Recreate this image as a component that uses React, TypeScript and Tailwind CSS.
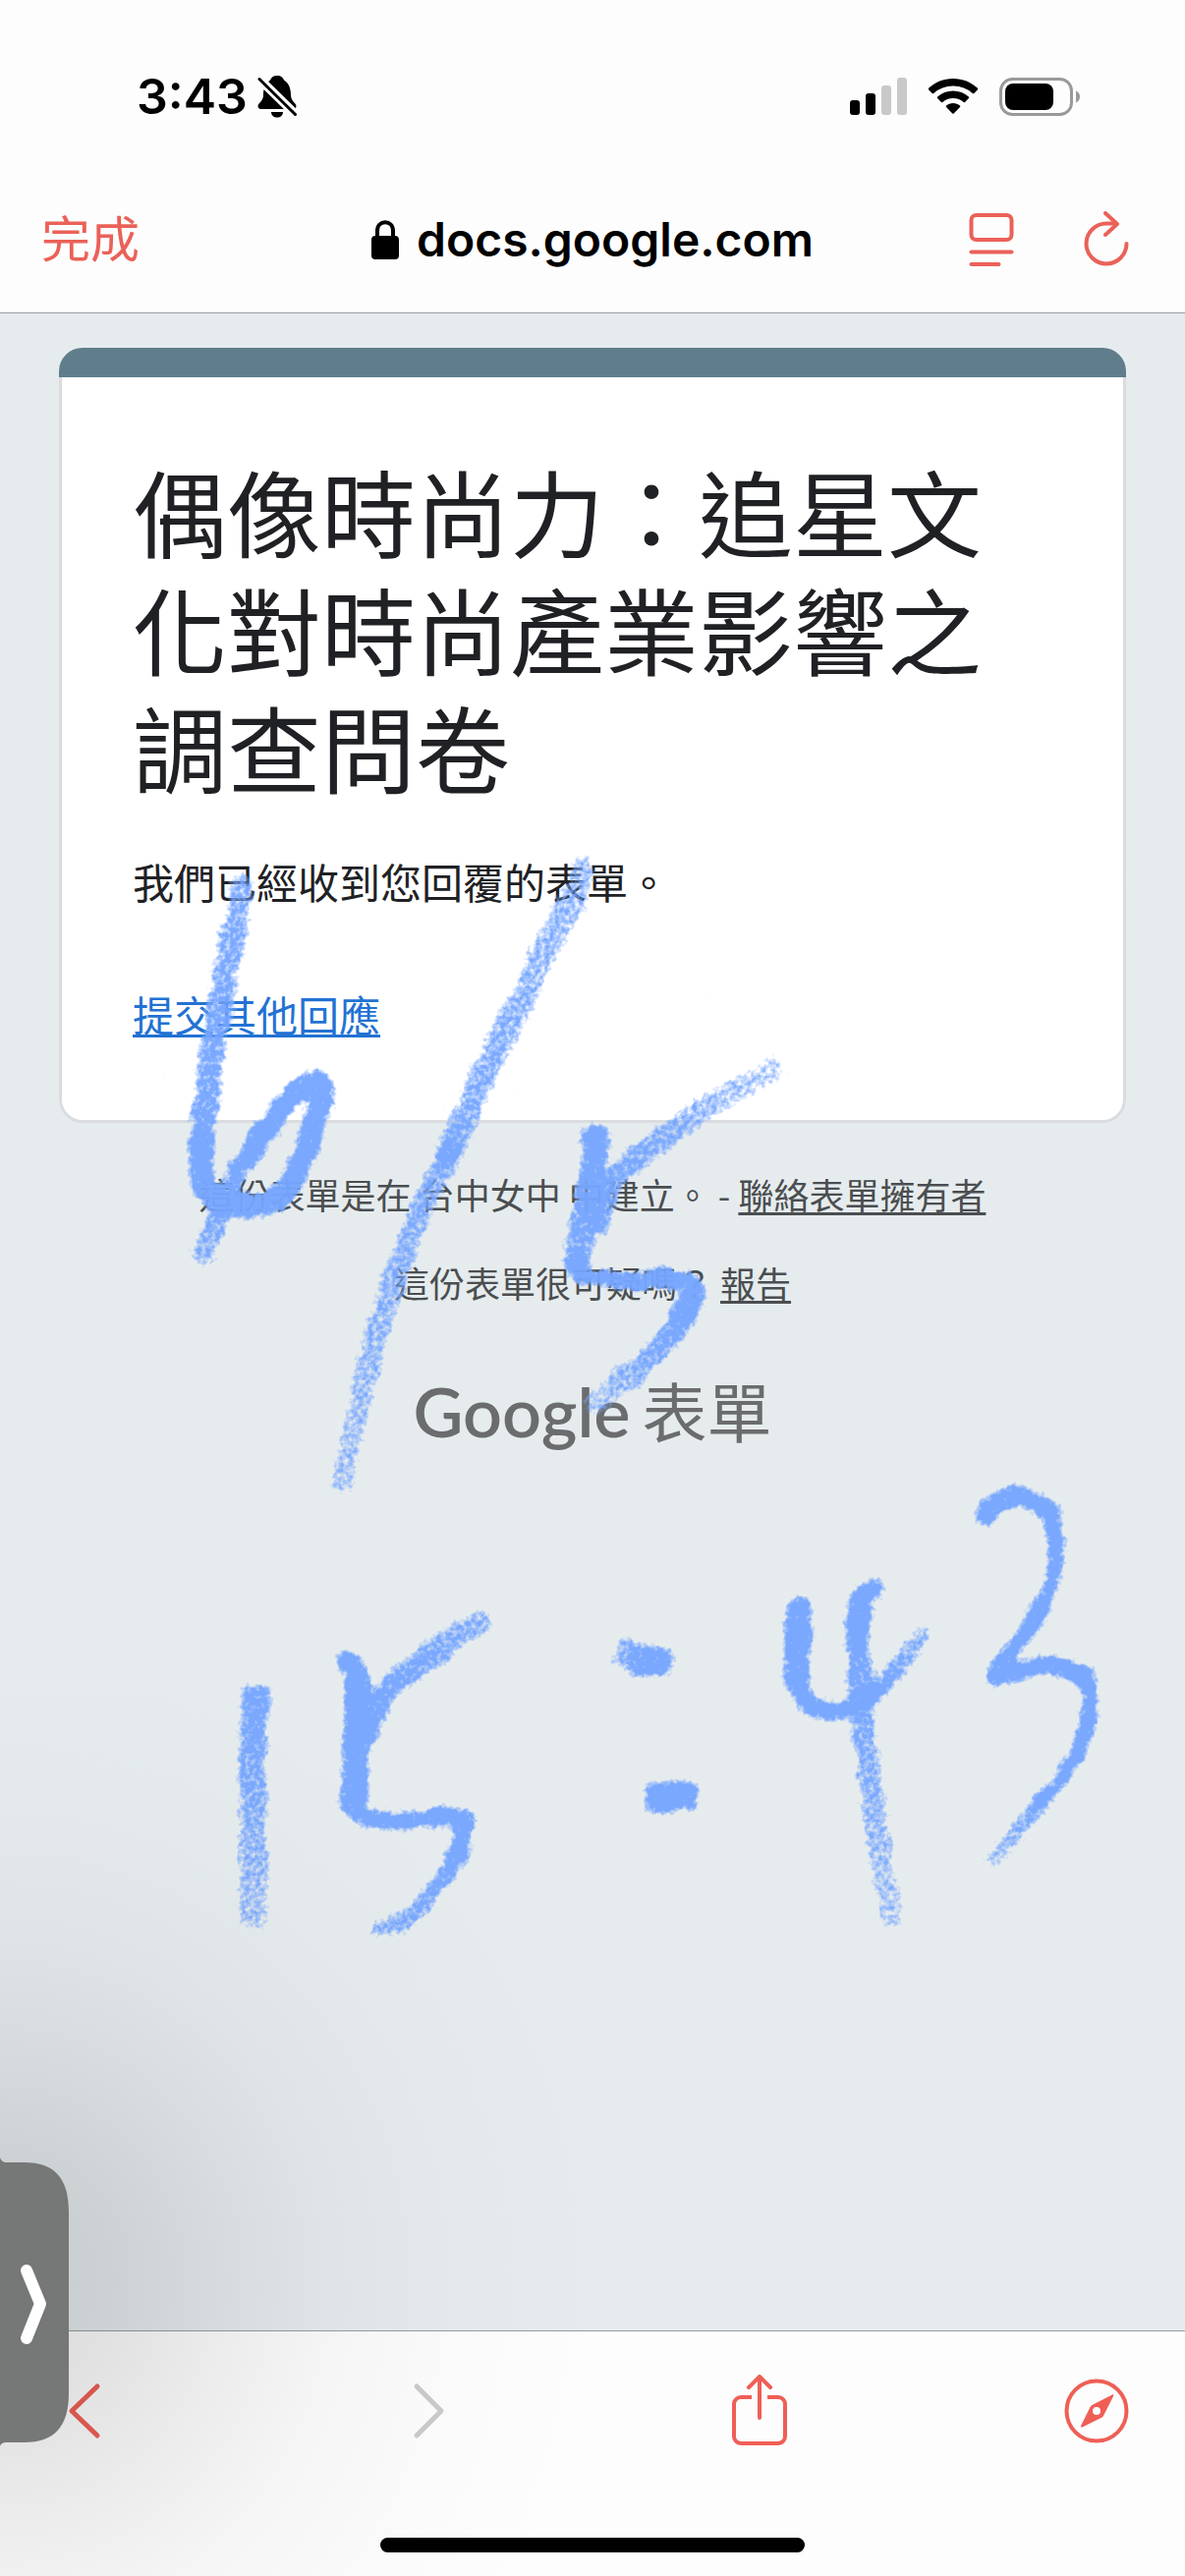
import { ReactNode } from "react";

type Fade = { x1: number; y1: number; x2: number; y2: number; from: number; to: number };
type Stroke = { d: string; width: number; fade?: Fade; butt?: boolean };

// handwritten date and time, in the coordinates of the overlay's viewBox
const strokes: Stroke[] = [
  // 6
  {
    d: "M246 902 C242 935 237 950 233 972 C228 1005 223 1030 219 1056 C214 1090 207 1130 205 1165",
    width: 27,
    fade: { x1: 0, y1: 890, x2: 0, y2: 1170, from: 0.7, to: 0.85 },
  },
  {
    d: "M205 1160 C203 1190 202 1214 224 1224 C240 1229 266 1230 282 1220 C304 1206 314 1160 324 1132 C332 1108 328 1098 316 1104 C296 1110 274 1144 258 1168",
    width: 25,
  },
  {
    d: "M258 1168 C240 1196 228 1224 220 1244 C215 1258 211 1266 208 1276",
    width: 24,
    fade: { x1: 0, y1: 1168, x2: 0, y2: 1290, from: 0.95, to: 0.62 },
  },
  // slash
  {
    d: "M594 886 C584 916 572 934 560 956 C546 986 534 1008 522 1034 C510 1060 500 1074 490 1098 C478 1126 470 1142 458 1172",
    width: 28,
    fade: { x1: 0, y1: 880, x2: 0, y2: 1172, from: 0.6, to: 0.76 },
  },
  {
    d: "M458 1172 C446 1200 432 1220 421 1250 C408 1286 396 1318 385 1356 C374 1394 368 1412 362 1444 C357 1470 352 1488 349 1508",
    width: 25,
    fade: { x1: 0, y1: 1172, x2: 0, y2: 1520, from: 0.74, to: 0.54 },
  },
  // 5
  {
    d: "M606 1158 C604 1180 602 1196 600 1214 C596 1240 588 1262 588 1288",
    width: 29,
    fade: { x1: 0, y1: 1150, x2: 0, y2: 1290, from: 1, to: 0.75 },
  },
  {
    d: "M587 1286 C590 1306 604 1301 624 1303 C654 1306 682 1298 706 1307 C712 1316 706 1330 698 1342",
    width: 19,
  },
  {
    d: "M702 1328 C690 1352 668 1378 648 1394 C632 1404 618 1420 606 1428",
    width: 25,
    fade: { x1: 702, y1: 1328, x2: 604, y2: 1430, from: 0.95, to: 0.52 },
  },
  {
    d: "M610 1244 C614 1212 626 1196 646 1180 C672 1160 694 1146 712 1132 C740 1112 764 1102 786 1087",
    width: 25,
    fade: { x1: 610, y1: 1240, x2: 790, y2: 1085, from: 0.85, to: 0.5 },
  },
  // 1
  {
    d: "M259 1716 C260 1750 255 1790 258 1833 C257 1880 258 1920 257 1962",
    width: 30,
    butt: true,
    fade: { x1: 0, y1: 1716, x2: 0, y2: 1962, from: 0.88, to: 0.54 },
  },
  // 5
  { d: "M351 1691 C366 1692 368 1724 368 1752", width: 20 },
  { d: "M364 1704 L364 1750 C362 1780 361 1812 360 1834", width: 27 },
  {
    d: "M360 1832 C362 1852 372 1852 394 1854 C426 1856 440 1845 474 1850 C474 1866 470 1874 466 1886",
    width: 19,
  },
  {
    d: "M470 1860 C468 1896 450 1914 436 1930 C424 1950 408 1958 388 1962",
    width: 20,
    fade: { x1: 470, y1: 1860, x2: 384, y2: 1964, from: 1, to: 0.66 },
  },
  {
    d: "M374 1762 C384 1734 394 1718 412 1704 C440 1686 462 1664 490 1652",
    width: 25,
    fade: { x1: 374, y1: 1762, x2: 494, y2: 1648, from: 0.95, to: 0.64 },
  },
  // colon
  { d: "M628 1679 L646 1690 L682 1692", width: 28, butt: true, fade: { x1: 624, y1: 0, x2: 654, y2: 0, from: 0.5, to: 0.95 } },
  { d: "M657 1828 L711 1828", width: 30, butt: true },
  // 4
  { d: "M814 1640 C810 1664 810 1690 811 1712", width: 28 },
  { d: "M811 1700 C811 1732 820 1738 846 1740 C866 1741 880 1730 892 1716", width: 18 },
  {
    d: "M878 1732 C902 1716 920 1690 938 1664",
    width: 21,
    fade: { x1: 880, y1: 1730, x2: 942, y2: 1658, from: 1, to: 0.54 },
  },
  { d: "M887 1616 C874 1620 876 1634 874 1672", width: 22 },
  {
    d: "M873 1650 C872 1690 876 1736 881 1778 C886 1820 893 1868 900 1912 C904 1932 906 1942 908 1953",
    width: 25,
    fade: { x1: 0, y1: 1650, x2: 0, y2: 1965, from: 0.88, to: 0.5 },
  },
  // 3
  { d: "M1004 1541 C1012 1525 1028 1521 1042 1524 C1056 1528 1066 1536 1073 1548", width: 21 },
  {
    d: "M1072 1544 C1075 1566 1077 1590 1070 1612 C1060 1648 1038 1668 1020 1690 L1012 1706",
    width: 17,
  },
  { d: "M1014 1704 C1034 1706 1052 1692 1076 1696 C1090 1698 1102 1702 1106 1712", width: 21 },
  { d: "M1107 1706 C1114 1750 1100 1784 1078 1812 L1060 1834", width: 16 },
  {
    d: "M1070 1822 C1050 1848 1030 1868 1012 1892",
    width: 18,
    fade: { x1: 1070, y1: 1822, x2: 1010, y2: 1896, from: 0.9, to: 0.5 },
  },
];

function Handwriting() {
  return (
    <svg
      className="absolute inset-0 w-full h-full pointer-events-none"
      viewBox="0 0 1206 2622"
      preserveAspectRatio="xMidYMin meet"
      aria-hidden="true"
    >
      <defs>
        {/* grainy crayon edge */}
        <filter id="crayon" filterUnits="userSpaceOnUse" x="150" y="840" width="1030" height="1160">
          <feTurbulence type="fractalNoise" baseFrequency="0.05" numOctaves="2" seed="4" result="wave" />
          <feDisplacementMap in="SourceGraphic" in2="wave" scale="12" xChannelSelector="R" yChannelSelector="G" result="bent" />
          <feGaussianBlur in="bent" stdDeviation="3" result="soft" />
          <feTurbulence type="fractalNoise" baseFrequency="0.2" numOctaves="2" seed="9" result="noise" />
          <feColorMatrix in="noise" type="matrix" values="0 0 0 0 0  0 0 0 0 0  0 0 0 0 0  1 0 0 0 0" result="grain" />
          <feComposite in="soft" in2="grain" operator="arithmetic" k1="0" k2="2" k3="1.8" k4="-1.5" result="mask" />
          <feFlood floodColor="#76a6ff" floodOpacity="0.96" />
          <feComposite in2="mask" operator="in" />
        </filter>
        {strokes.map(({ fade }, i) =>
          fade ? (
            <linearGradient
              key={i}
              id={`fade-${i}`}
              gradientUnits="userSpaceOnUse"
              x1={fade.x1}
              y1={fade.y1}
              x2={fade.x2}
              y2={fade.y2}
            >
              <stop offset="0" stopColor="#76a6ff" stopOpacity={fade.from} />
              <stop offset="1" stopColor="#76a6ff" stopOpacity={fade.to} />
            </linearGradient>
          ) : null
        )}
      </defs>
      <g filter="url(#crayon)" fill="none" strokeLinejoin="round">
        {strokes.map(({ d, width, fade, butt }, i) => (
          <path
            key={i}
            d={d}
            stroke={fade ? `url(#fade-${i})` : "#76a6ff"}
            strokeWidth={width}
            strokeLinecap={butt ? "butt" : "round"}
          />
        ))}
      </g>
    </svg>
  );
}

function StatusBar() {
  return (
    <div className="flex items-center justify-between h-[170px] pt-[26px] pl-[139px] pr-[107px]">
      <div className="flex items-center gap-[10px]">
        <span className="text-[50px] leading-none font-semibold">3:43</span>
        <svg className="w-[40px] h-[43px]" viewBox="0 0 40 43">
          <path d="M20 0c4 0 6 2 7 4.500C32.500 8 34 14 34 20c0 6 5.500 8 5.500 11 0 2-1.500 3-3 3H3.500c-1.500 0-3-1-3-3 0-3 5.500-5 5.500-11C6 14 7.500 8 13 4.500 14 2 16 0 20 0z" />
          <path d="M14 37h12c0 3.500-2.500 5.500-6 5.500s-6-2-6-5.500z" />
          <path d="M1 2.500l38 37" stroke="#fdfdfd" strokeWidth="9" />
          <path d="M2 3.500l36.500 36" stroke="#000" strokeWidth="3" strokeLinecap="round" />
        </svg>
      </div>
      <div className="flex items-center gap-[22px]">
        <svg className="w-[58px] h-[38px]" viewBox="0 0 58 38">
          <rect x="0" y="23" width="10" height="15" rx="3" />
          <rect x="16" y="16" width="10" height="22" rx="3" />
          <rect x="32" y="8" width="10" height="30" rx="3" fill="#c9c9c9" />
          <rect x="48" y="0" width="10" height="38" rx="3" fill="#c9c9c9" />
        </svg>
        <svg className="w-[50px] h-[37px]" viewBox="0 0 50 37">
          <path d="M25 0c9.600 0 18.400 3.700 25 9.800.4.400.4 1 0 1.400l-3.700 3.800c-.4.400-1 .4-1.500 0A29 29 0 0 0 25 7.500 29 29 0 0 0 5.200 15c-.5.400-1.100.4-1.500 0L0 11.200c-.4-.4-.4-1 0-1.400C6.600 3.700 15.400 0 25 0z" />
          <path d="M25 12.500c6 0 11.600 2.300 15.900 6.100.4.400.4 1 0 1.400l-3.800 3.900c-.4.400-1 .4-1.400 0A16 16 0 0 0 25 20a16 16 0 0 0-10.700 3.900c-.4.400-1 .4-1.400 0L9.100 20c-.4-.4-.4-1 0-1.400C13.400 14.800 19 12.500 25 12.500z" />
          <path d="M25 25c2.700 0 5.100.9 7 2.600.4.300.4 1 0 1.400l-6.300 6.500c-.4.400-1 .4-1.400 0L18 29c-.4-.4-.4-1.100 0-1.400 1.900-1.700 4.300-2.600 7-2.600z" />
        </svg>
        <svg className="w-[82px] h-[39px]" viewBox="0 0 82 39">
          <rect x="1.500" y="1.500" width="72" height="36" rx="12" fill="none" stroke="#999" strokeWidth="3" />
          <rect x="6" y="6" width="49" height="27" rx="8" />
          <path d="M78 13.500c2.500 1 4 3.300 4 6s-1.500 5-4 6z" fill="#999" />
        </svg>
      </div>
    </div>
  );
}

function IconButton({ label, className, children }: { label: string; className?: string; children: ReactNode }) {
  return (
    <button type="button" aria-label={label} className={className}>
      {children}
    </button>
  );
}

function AddressBar() {
  return (
    <div className="grid grid-cols-[1fr_auto_1fr] items-center h-[148px] px-[42px]">
      <button type="button" className="justify-self-start text-[50px] leading-none text-[#ea6159]">
        完成
      </button>
      <div className="flex items-center gap-[18px]">
        <svg className="w-[28px] h-[40px]" viewBox="0 0 28 40">
          <rect y="16" width="28" height="24" rx="4" />
          <path d="M6 18v-7C6 5.500 9.500 2.200 14 2.200S22 5.500 22 11v7" fill="none" stroke="#000" strokeWidth="4" />
        </svg>
        <span className="text-[48px] leading-none font-semibold">docs.google.com</span>
      </div>
      <div className="flex items-center gap-[71px] justify-self-end pr-[15px] text-[#ea6159]">
        <IconButton label="閱讀器">
          <svg className="w-[46px] h-[54px]" viewBox="0 0 46 54" fill="none" stroke="currentColor" strokeWidth="4" strokeLinecap="round">
            <rect x="2.500" y="2" width="41" height="25" rx="5" />
            <path d="M2.500 39.500h41M2.500 52h28" />
          </svg>
        </IconButton>
        <IconButton label="重新載入">
          <svg className="w-[46px] h-[58px]" viewBox="0 0 46 58" fill="none" stroke="currentColor" strokeWidth="4" strokeLinecap="round" strokeLinejoin="round">
            <path d="M33 12.500H23A20.500 20.500 0 1 0 43.500 33" />
            <path d="M22 2l12 11L22 24" />
          </svg>
        </IconButton>
      </div>
    </div>
  );
}

function ResponseCard() {
  return (
    <section>
      <div className="h-[30px] rounded-t-[24px] bg-[#607d8b]" />
      <div className="px-[72px] pt-[75px] pb-[78px] bg-white border-[3px] border-t-0 border-[#dadce0] rounded-b-[24px]">
        <h1 className="text-[96px] leading-[120px] text-[#202124]">
          偶像時尚力：追星文化對時尚產業影響之調查問卷
        </h1>
        <p className="mt-[48px] text-[42px] leading-[60px] text-[#202124]">我們已經收到您回覆的表單。</p>
        <p className="mt-[75px] text-[42px] leading-[60px]">
          <a href="#" className="text-[#2272d3] underline underline-offset-[3px] decoration-[3px]">
            提交其他回應
          </a>
        </p>
      </div>
    </section>
  );
}

function FormFooter() {
  return (
    <footer className="text-center text-[36px] leading-[54px] text-[#4b4e50]">
      <p className="mt-[45px]">
        這份表單是在 台中女中 中建立。 -{" "}
        <a href="#" className="underline underline-offset-[3px] decoration-[3px]">
          聯絡表單擁有者
        </a>
      </p>
      <p className="mt-[36px]">
        這份表單很可疑嗎？{" "}
        <a href="#" className="underline underline-offset-[3px] decoration-[3px]">
          報告
        </a>
      </p>
      <div className="flex items-baseline justify-center gap-3 mt-[54px] leading-[96px] text-[#6b6c6e]">
        <span className="text-[70px] font-['Lato',sans-serif] font-semibold">Google</span>
        <span className="text-[66px]">表單</span>
      </div>
    </footer>
  );
}

function BottomBar() {
  return (
    <nav className="border-t border-[#9d9da0] bg-[#fdfdfd]">
      <div className="flex items-center justify-between h-[162px] pl-[55px] pr-[57px] text-[#ef5f56]">
        <IconButton label="上一頁">
          <svg className="w-[66px] h-[74px]" viewBox="0 0 66 74" fill="none" stroke="currentColor" strokeWidth="5" strokeLinecap="round" strokeLinejoin="round">
            <path d="M44 12L18 37l26 25" />
          </svg>
        </IconButton>
        <IconButton label="下一頁" className="text-[#cbcbcb]">
          <svg className="w-[66px] h-[74px]" viewBox="0 0 66 74" fill="none" stroke="currentColor" strokeWidth="5" strokeLinecap="round" strokeLinejoin="round">
            <path d="M26 12l25 25-25 25" />
          </svg>
        </IconButton>
        <IconButton label="分享">
          <svg className="w-[66px] h-[74px]" viewBox="0 0 66 74" fill="none" stroke="currentColor" strokeWidth="4" strokeLinecap="round" strokeLinejoin="round">
            <path d="M25 23H14a7 7 0 0 0-7 7v33a7 7 0 0 0 7 7h38a7 7 0 0 0 7-7V30a7 7 0 0 0-7-7H41" strokeLinecap="butt" />
            <path d="M33 44V3M22 13L33 2l11 11" />
          </svg>
        </IconButton>
        <IconButton label="在瀏覽器中開啟">
          <svg className="w-[66px] h-[74px]" viewBox="0 0 66 74">
            <circle cx="33" cy="37" r="30.500" fill="none" stroke="currentColor" strokeWidth="4" />
            <path fill="currentColor" fillRule="evenodd" d="M49 20.500c.8-.6 1.700.3 1.200 1.200L40 42c-.4.800-1 1.400-1.800 1.800L18.500 53.500c-1 .5-2-.4-1.400-1.400L26.500 33c.4-.8 1-1.500 1.800-2zM33 33a4 4 0 1 0 0 8 4 4 0 0 0 0-8z" />
          </svg>
        </IconButton>
      </div>
      <div className="pt-[48px] pb-[24px]">
        <div className="w-[432px] h-[15px] mx-auto rounded-full bg-black" />
      </div>
    </nav>
  );
}

export default function App() {
  return (
    <div className="relative flex flex-col min-h-screen overflow-hidden bg-[#e6ecee] text-black font-['Inter','Noto_Sans_CJK_TC',sans-serif]">
      <header className="border-b border-[#9d9da0] bg-[#fdfdfd]">
        <StatusBar />
        <AddressBar />
      </header>

      <main className="flex-1 px-[60px] pt-[35px] font-['Noto_Sans_CJK_TC',sans-serif]">
        <ResponseCard />
        <FormFooter />
      </main>

      <BottomBar />

      <Handwriting />

      {/* picture-in-picture tab docked at the left edge */}
      <div className="absolute bottom-0 left-0 w-[620px] h-[900px] pointer-events-none bg-[radial-gradient(ellipse_620px_650px_at_0px_600px,rgba(0,0,0,0.14)_0%,rgba(0,0,0,0.11)_20%,rgba(0,0,0,0.065)_38%,rgba(0,0,0,0.03)_55%,rgba(0,0,0,0.01)_75%,transparent_100%)]" />
      <button type="button" aria-label="顯示影片" className="absolute left-0 bottom-[130px] w-[70px] h-[298px]">
        <svg className="w-full h-full" viewBox="0 0 70 298">
          <path d="M0 2c1 3 3 5 7 5h18c30 0 45 16 45 50v185c0 34-15 50-45 50H7c-4 0-6 1-7 4z" fill="#767777" />
          <path d="M27 117l14 34-14 35" fill="none" stroke="#fff" strokeWidth="12" strokeLinecap="round" strokeLinejoin="round" />
        </svg>
      </button>
    </div>
  );
}
